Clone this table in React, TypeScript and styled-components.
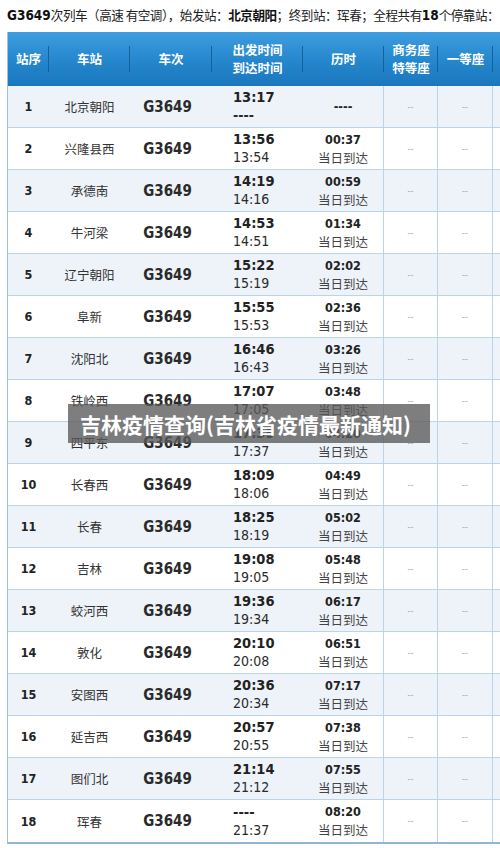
import React from "react";
import styled, { createGlobalStyle } from "styled-components";

const Global = createGlobalStyle`
  html, body { margin: 0; padding: 0; background: #fff; }
  body { width: 500px; height: 848px; overflow: hidden; }
`;

const CJK = `"Noto Sans CJK SC", "Noto Sans", sans-serif`;
const NUM = `"DejaVu Sans Condensed", "DejaVu Sans", "Noto Sans CJK SC", sans-serif`;

const Page = styled.div`
  position: relative;
  width: 500px;
  height: 848px;
  overflow: hidden;
  background: #fff;
`;

const Caption = styled.div`
  height: 29px;
  padding-left: 7px;
  display: flex;
  align-items: center;
  white-space: nowrap;
  font-family: ${CJK};
  font-size: 12.6px;
  color: #222;
  letter-spacing: -0.5px;
`;

const CapBold = styled.b`
  font-family: ${NUM};
  font-weight: 700;
  font-size: 13.5px;
  letter-spacing: 0;
  color: #111;
`;

const CapStrong = styled.b`
  font-weight: 700;
  color: #111;
`;

const Table = styled.div`
  margin-top: 3px;
  margin-left: 7px;
  width: 540px;
  border-left: 1px solid #9ec2dc;
  border-bottom: 2px solid #8fb6d2;
`;

const COLS = "41px 81px 82px 91px 81px 54px 55px 1fr";

const HeaderRow = styled.div`
  display: grid;
  grid-template-columns: ${COLS};
  height: 54px;
  background: linear-gradient(#3f9de0, #2486cc 55%, #1b77bd);
`;

const HeadCell = styled.div<{ $sep?: boolean }>`
  position: relative;
  display: flex;
  align-items: center;
  justify-content: center;
  text-align: center;
  font-family: ${CJK};
  font-weight: 700;
  font-size: 12.5px;
  line-height: 18px;
  color: #fff;
  &::after {
    content: "";
    display: ${(p) => (p.$sep ? "block" : "none")};
    position: absolute;
    right: 0;
    top: 14px;
    bottom: 14px;
    width: 1px;
    background: #16609c;
  }
`;

const Row = styled.div<{ $shade: boolean }>`
  display: grid;
  grid-template-columns: ${COLS};
  height: 42px;
  box-sizing: border-box;
  border-bottom: 1px solid #bcd4e8;
  background: ${(p) => (p.$shade ? "#eef2f9" : "#ffffff")};
  &:last-child { border-bottom: none; }
`;

const Cell = styled.div<{ $line?: boolean; $align?: "left" | "center" }>`
  display: flex;
  flex-direction: column;
  justify-content: center;
  align-items: ${(p) => (p.$align === "left" ? "flex-start" : "center")};
  padding-left: ${(p) => (p.$align === "left" ? "21px" : "0")};
  box-sizing: border-box;
  border-right: ${(p) => (p.$line ? "1px solid #bcd4e8" : "none")};
`;

const Seq = styled.span`
  font-family: ${NUM};
  font-weight: 700;
  font-size: 12.5px;
  color: #222;
`;

const Station = styled.span`
  font-family: ${CJK};
  font-size: 12.5px;
  color: #333;
`;

const Train = styled.span`
  font-family: ${NUM};
  font-weight: 700;
  font-size: 15px;
  color: #2a2a2a;
  margin-right: 7px;
`;

const TimeTop = styled.span`
  font-family: ${NUM};
  font-weight: 700;
  font-size: 14.5px;
  line-height: 17px;
  color: #222;
`;

const TimeBottom = styled.span<{ $bold?: boolean }>`
  font-family: ${NUM};
  font-size: 14px;
  font-weight: ${(p) => (p.$bold ? 700 : 400)};
  line-height: 18px;
  color: #2a2a2a;
`;

const Dur = styled.span`
  font-family: ${NUM};
  font-weight: 700;
  font-size: 12.5px;
  line-height: 17px;
  color: #222;
`;

const Arrive = styled.span`
  font-family: ${CJK};
  font-size: 12.5px;
  line-height: 19px;
  color: #444;
`;

const Dash = styled.span`
  font-family: ${NUM};
  font-size: 9px;
  color: #9aa;
`;

const Overlay = styled.div`
  position: absolute;
  left: 68px;
  top: 404px;
  width: 362px;
  height: 39px;
  box-sizing: border-box;
  padding-left: 12px;
  display: flex;
  align-items: center;
  background: rgba(90, 90, 90, 0.78);
  font-family: ${CJK};
  font-weight: 700;
  font-size: 21px;
  color: #fff;
  white-space: nowrap;
`;

type Stop = { name: string; dep: string; arr: string; dur: string };

const stops: Stop[] = [
  { name: "北京朝阳", dep: "13:17", arr: "----", dur: "----" },
  { name: "兴隆县西", dep: "13:56", arr: "13:54", dur: "00:37" },
  { name: "承德南", dep: "14:19", arr: "14:16", dur: "00:59" },
  { name: "牛河梁", dep: "14:53", arr: "14:51", dur: "01:34" },
  { name: "辽宁朝阳", dep: "15:22", arr: "15:19", dur: "02:02" },
  { name: "阜新", dep: "15:55", arr: "15:53", dur: "02:36" },
  { name: "沈阳北", dep: "16:46", arr: "16:43", dur: "03:26" },
  { name: "铁岭西", dep: "17:07", arr: "17:05", dur: "03:48" },
  { name: "四平东", dep: "17:39", arr: "17:37", dur: "04:20" },
  { name: "长春西", dep: "18:09", arr: "18:06", dur: "04:49" },
  { name: "长春", dep: "18:25", arr: "18:19", dur: "05:02" },
  { name: "吉林", dep: "19:08", arr: "19:05", dur: "05:48" },
  { name: "蛟河西", dep: "19:36", arr: "19:34", dur: "06:17" },
  { name: "敦化", dep: "20:10", arr: "20:08", dur: "06:51" },
  { name: "安图西", dep: "20:36", arr: "20:34", dur: "07:17" },
  { name: "延吉西", dep: "20:57", arr: "20:55", dur: "07:38" },
  { name: "图们北", dep: "21:14", arr: "21:12", dur: "07:55" },
  { name: "珲春", dep: "----", arr: "21:37", dur: "08:20" },
];

export default function App() {
  return (
    <Page>
      <Global />
      <Caption>
        <CapBold>G3649</CapBold>次列车（高速 有空调），始发站：<CapStrong>北京朝阳</CapStrong>；终到站：珲春；全程共有
        <CapBold>18</CapBold>个停靠站：
      </Caption>
      <Table>
        <HeaderRow>
          <HeadCell $sep>站序</HeadCell>
          <HeadCell $sep>车站</HeadCell>
          <HeadCell $sep>车次</HeadCell>
          <HeadCell $sep>
            出发时间
            <br />
            到达时间
          </HeadCell>
          <HeadCell $sep>历时</HeadCell>
          <HeadCell $sep>
            商务座
            <br />
            特等座
          </HeadCell>
          <HeadCell $sep>一等座</HeadCell>
          <HeadCell />
        </HeaderRow>
        {stops.map((s, i) => (
          <Row key={i} $shade={i % 2 === 0}>
            <Cell>
              <Seq>{i + 1}</Seq>
            </Cell>
            <Cell>
              <Station>{s.name}</Station>
            </Cell>
            <Cell>
              <Train>G3649</Train>
            </Cell>
            <Cell $align="left">
              <TimeTop>{s.dep}</TimeTop>
              <TimeBottom $bold={s.arr === "----"}>{s.arr}</TimeBottom>
            </Cell>
            <Cell $line>
              {i === 0 ? (
                <Dur>----</Dur>
              ) : (
                <>
                  <Dur>{s.dur}</Dur>
                  <Arrive>当日到达</Arrive>
                </>
              )}
            </Cell>
            <Cell $line>
              <Dash>--</Dash>
            </Cell>
            <Cell $line>
              <Dash>--</Dash>
            </Cell>
            <Cell $line />
          </Row>
        ))}
      </Table>
      <Overlay>吉林疫情查询(吉林省疫情最新通知)</Overlay>
    </Page>
  );
}
